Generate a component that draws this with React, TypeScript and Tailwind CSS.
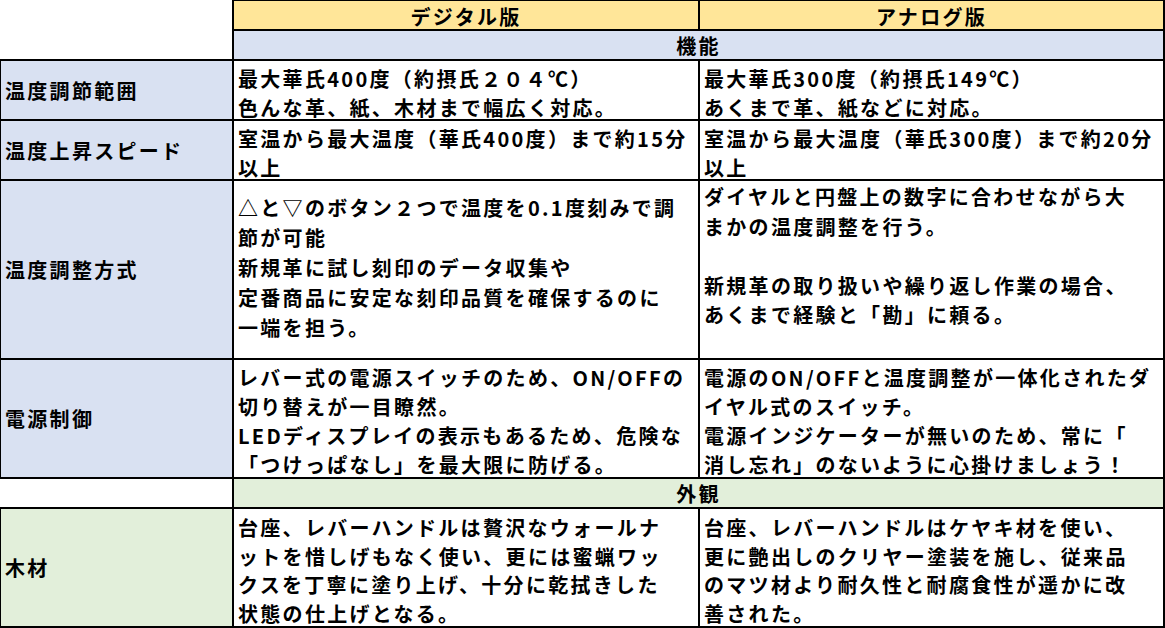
import React from "react";

const font = {
  fontFamily: '"Noto Sans CJK JP", "Noto Sans", sans-serif',
};

function Lines({ lines, lh = "h-[28.5px]" }: { lines: string[]; lh?: string }) {
  return (
    <>
      {lines.map((l, i) => (
        <div key={i} className={`whitespace-nowrap ${lh} leading-[28.5px]`}>
          {l === "" ? "\u00a0" : l}
        </div>
      ))}
    </>
  );
}

function Label({ text, green }: { text: string; green?: boolean }) {
  return (
    <div
      className={`border-l border-r-2 border-b-2 border-black ${green ? "bg-[#e2efda]" : "bg-[#d9e1f2]"} flex items-center pl-[4px] whitespace-nowrap`}
    >
      {text}
    </div>
  );
}

function Cell({
  lines,
  wrap = "-mb-[3px]",
  lh,
}: {
  lines: string[];
  wrap?: string;
  lh?: string;
}) {
  return (
    <div className="border-b-2 border-r-2 border-black bg-white flex flex-col justify-end pl-[4px]">
      <div className={wrap}>
        <Lines lines={lines} lh={lh} />
      </div>
    </div>
  );
}

export default function App() {
  return (
    <div
      className="w-[1165px] h-[628px] bg-white text-black font-bold text-[20px] leading-[29px] tracking-[2.3px] overflow-hidden grid grid-cols-[234px_466px_465px] grid-rows-[31px_30px_60px_60px_179px_119px_30px_119px]"
      style={font}
    >
      {/* header row */}
      <div className="border-r-2 border-black bg-white" />
      <div className="border-t border-r-2 border-b-2 border-black bg-[#ffe699] flex items-center justify-center pt-[2px]">
        デジタル版
      </div>
      <div className="border-t border-r-2 border-b-2 border-black bg-[#ffe699] flex items-center justify-center pt-[2px]">
        アナログ版
      </div>

      {/* 機能 */}
      <div className="border-r-2 border-b-2 border-black bg-white" />
      <div className="col-span-2 border-r-2 border-b-2 border-black bg-[#d9e1f2] flex items-center justify-center pt-[1px]">
        機能
      </div>

      <Label text="温度調節範囲" />
      <Cell lines={["最大華氏400度（約摂氏２０４℃）", "色んな革、紙、木材まで幅広く対応。"]} />
      <Cell lines={["最大華氏300度（約摂氏149℃）", "あくまで革、紙などに対応。"]} />

      <Label text="温度上昇スピード" />
      <Cell lines={["室温から最大温度（華氏400度）まで約15分", "以上"]} />
      <Cell lines={["室温から最大温度（華氏300度）まで約20分", "以上"]} />

      <Label text="温度調整方式" />
      <Cell
        wrap="pb-[14px]"
        lh="h-[30px]"
        lines={[
          "△と▽のボタン２つで温度を0.1度刻みで調",
          "節が可能",
          "新規革に試し刻印のデータ収集や",
          "定番商品に安定な刻印品質を確保するのに",
          "一端を担う。",
        ]}
      />
      <Cell
        wrap="-mb-[2px]"
        lh="h-[29.5px]"
        lines={[
          "ダイヤルと円盤上の数字に合わせながら大",
          "まかの温度調整を行う。",
          "",
          "新規革の取り扱いや繰り返し作業の場合、",
          "あくまで経験と「勘」に頼る。",
          "",
        ]}
      />

      <Label text="電源制御" />
      <Cell
        lh="h-[29px]"
        lines={[
          "レバー式の電源スイッチのため、ON/OFFの",
          "切り替えが一目瞭然。",
          "LEDディスプレイの表示もあるため、危険な",
          "「つけっぱなし」を最大限に防げる。",
        ]}
      />
      <Cell
        lh="h-[29px]"
        lines={[
          "電源のON/OFFと温度調整が一体化されたダ",
          "イヤル式のスイッチ。",
          "電源インジケーターが無いのため、常に「",
          "消し忘れ」のないように心掛けましょう！",
        ]}
      />

      {/* 外観 */}
      <div className="border-r-2 border-b-2 border-black bg-white" />
      <div className="col-span-2 border-r-2 border-b-2 border-black bg-[#e2efda] flex items-center justify-center pt-[1px]">
        外観
      </div>

      <Label text="木材" green />
      <Cell
        wrap="-mb-[2px]"
        lh="h-[28.5px]"
        lines={[
          "台座、レバーハンドルは贅沢なウォールナ",
          "ットを惜しげもなく使い、更には蜜蝋ワッ",
          "クスを丁寧に塗り上げ、十分に乾拭きした",
          "状態の仕上げとなる。",
        ]}
      />
      <Cell
        wrap="-mb-[2px]"
        lh="h-[28.5px]"
        lines={[
          "台座、レバーハンドルはケヤキ材を使い、",
          "更に艶出しのクリヤー塗装を施し、従来品",
          "のマツ材より耐久性と耐腐食性が遥かに改",
          "善された。",
        ]}
      />
    </div>
  );
}
